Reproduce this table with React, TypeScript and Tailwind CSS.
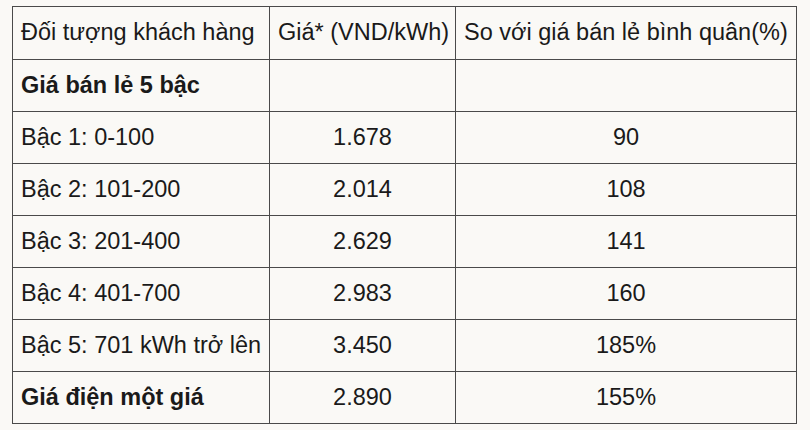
import React from 'react';

const rows: { label: string; price: string; ratio: string; bold?: boolean }[] = [
  { label: 'Giá bán lẻ 5 bậc', price: '', ratio: '', bold: true },
  { label: 'Bậc 1: 0-100', price: '1.678', ratio: '90' },
  { label: 'Bậc 2: 101-200', price: '2.014', ratio: '108' },
  { label: 'Bậc 3: 201-400', price: '2.629', ratio: '141' },
  { label: 'Bậc 4: 401-700', price: '2.983', ratio: '160' },
  { label: 'Bậc 5: 701 kWh trở lên', price: '3.450', ratio: '185%' },
  { label: 'Giá điện một giá', price: '2.890', ratio: '155%', bold: true },
];

export default function App() {
  return (
    <div
      className="w-[810px] h-[430px] bg-[#faf9f6] pt-[6px] pl-[12px] text-[#1a1a1a] text-[23.5px]"
      style={{ fontFamily: '"Liberation Sans", Arial, sans-serif' }}
    >
      <table className="border-collapse table-fixed w-[784px]">
        <colgroup>
          <col className="w-[257px]" />
          <col className="w-[186px]" />
          <col className="w-[341px]" />
        </colgroup>
        <tbody>
          <tr className="h-[53px]">
            <td className="border border-[#4a4a4a] px-2 whitespace-nowrap">Đối tượng khách hàng</td>
            <td className="border border-[#4a4a4a] px-2 whitespace-nowrap">Giá* (VND/kWh)</td>
            <td className="border border-[#4a4a4a] px-2 whitespace-nowrap">So với giá bán lẻ bình quân(%)</td>
          </tr>
          {rows.map((r) => (
            <tr key={r.label} className="h-[52px]">
              <td className={`border border-[#4a4a4a] px-2 whitespace-nowrap ${r.bold ? 'font-bold' : ''}`}>{r.label}</td>
              <td className="border border-[#4a4a4a] px-2 text-center">{r.price}</td>
              <td className="border border-[#4a4a4a] px-2 text-center">{r.ratio}</td>
            </tr>
          ))}
        </tbody>
      </table>
    </div>
  );
}
